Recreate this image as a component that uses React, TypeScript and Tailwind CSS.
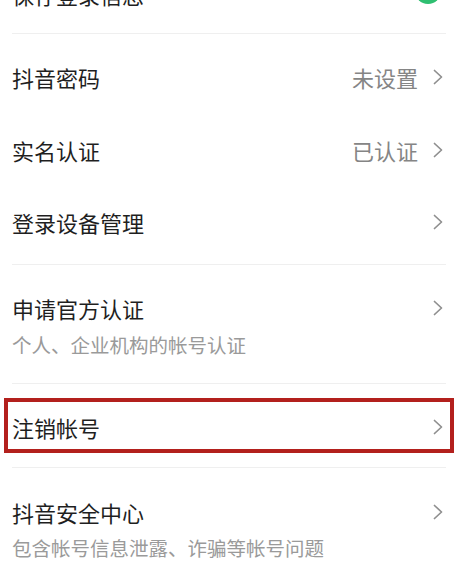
import React from "react";

const font = { fontFamily: '"Noto Sans CJK SC", "Noto Sans", sans-serif' };

function Chevron() {
  return (
    <svg width="10" height="16" viewBox="0 0 10 16" className="shrink-0">
      <polyline points="1.5,1.5 8.5,8 1.5,14.5" fill="none" stroke="#8f8f8f" strokeWidth="1.7" strokeLinecap="round" strokeLinejoin="round" />
    </svg>
  );
}

function Divider() {
  return <div className="ml-3 mr-5 h-px bg-[#efefef]" />;
}

export default function App() {
  return (
    <div className="w-[466px] h-[574px] overflow-hidden bg-white text-[#1f1f1f]" style={font}>
      {/* partially visible top row */}
      <div className="-mt-[43px] h-[76px] flex items-center justify-between pl-3 pr-[20px]">
        <span className="text-[22px] leading-[30px] mb-[3px]">保存登录信息</span>
        <div className="w-[26px] h-[26px] rounded-full bg-[#2fbf71] mr-[5px] mb-[8px]" />
      </div>
      <Divider />

      <div className="h-[86px] flex items-center justify-between pl-3 pr-[23px]">
        <span className="text-[22px] leading-[30px]">抖音密码</span>
        <div className="flex items-center gap-[15px]">
          <span className="text-[22px] leading-[30px] text-[#858585]">未设置</span>
          <Chevron />
        </div>
      </div>
      <div className="h-[60px] flex items-center justify-between pl-3 pr-[23px]">
        <span className="text-[22px] leading-[30px]">实名认证</span>
        <div className="flex items-center gap-[15px]">
          <span className="text-[22px] leading-[30px] text-[#858585]">已认证</span>
          <Chevron />
        </div>
      </div>
      <div className="h-[84px] flex items-center justify-between pl-3 pr-[23px]">
        <span className="text-[22px] leading-[30px]">登录设备管理</span>
        <Chevron />
      </div>
      <Divider />

      <div className="pt-[28px] pb-[24px] pl-3 pr-[23px]">
        <div className="flex items-center justify-between">
          <span className="text-[22px] leading-[30px]">申请官方认证</span>
          <Chevron />
        </div>
        <div className="mt-[8px] text-[19.5px] leading-[28px] text-[#9a9a9a]">个人、企业机构的帐号认证</div>
      </div>
      <Divider />

      <div className="relative h-[83px] pt-[3px] flex items-center justify-between pl-3 pr-[23px]">
        <span className="text-[22px] leading-[30px]">注销帐号</span>
        <Chevron />
        <div className="absolute left-[4px] right-[12px] top-[14px] bottom-[14px] border-[4px] border-[#b3201d]" />
      </div>
      <Divider />

      <div className="pt-[29px] pb-[20px] pl-3 pr-[23px]">
        <div className="flex items-center justify-between">
          <span className="text-[22px] leading-[30px]">抖音安全中心</span>
          <Chevron />
        </div>
        <div className="mt-[7px] text-[19.5px] leading-[28px] text-[#9a9a9a]">包含帐号信息泄露、诈骗等帐号问题</div>
      </div>
    </div>
  );
}
